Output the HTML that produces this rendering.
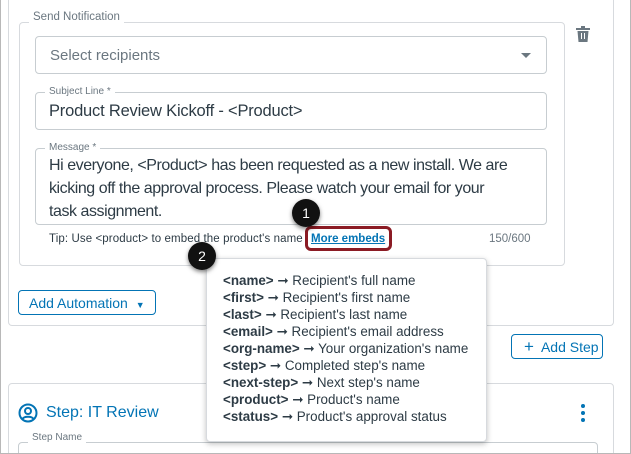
<!DOCTYPE html>
<html style="overflow:hidden;width:631px;height:454px"><head><style>
*{box-sizing:border-box;margin:0;padding:0}
body{width:631px;height:454px;overflow:hidden;background:#fff;font-family:"Liberation Sans",sans-serif;color:#2d3b45;position:relative}
.abs{position:absolute}
.frame{left:0;top:0;width:631px;height:454px;border:1px solid #b8b8b8;border-top:none;z-index:5;pointer-events:none}
.card{border:1px solid #d7dade;border-radius:4px}
.inp{border:1px solid #c7cdd1;border-radius:4px;background:#fff}
.lbl{font-size:10px;color:#6b7780;background:#fff;padding:0 4px}
.pop{left:206px;top:258px;width:281px;height:184px;background:#fff;border:1px solid #d7dade;border-radius:4px;box-shadow:0 2px 6px rgba(0,0,0,.25);padding:13px 0 0 16px;font-size:13.4px;line-height:17px;color:#2d3b45}
.pop b{font-weight:bold}
.badge{width:28px;height:28px;border-radius:50%;background:#111;color:#fff;font-size:14px;text-align:center;line-height:28px;box-shadow:0 2px 4px rgba(0,0,0,.5)}
.btn{border:1px solid #0374b5;border-radius:4px;color:#0374b5;font-size:14px;background:#fff}
</style></head><body>
<div class="abs frame"></div>
<div class="abs card" style="left:8px;top:-5px;width:606px;height:331px;border-top:none"></div>
<div class="abs card" style="left:19px;top:22px;width:546px;height:244px"></div>
<div class="abs" style="left:29px;top:11px;font-size:11.5px;color:#6b7780;background:#fff;padding:0 4px">Send Notification</div>
<svg class="abs" style="left:576px;top:26px" width="14" height="16" viewBox="0 0 14 16"><rect x="0" y="2" width="14" height="2" fill="#6b7780"/><rect x="5" y="0" width="4" height="2" fill="#6b7780"/><path d="M1.5 5h11l-1 11h-9z" fill="#6b7780"/><rect x="5" y="7" width="1" height="6" fill="#fff"/><rect x="8" y="7" width="1" height="6" fill="#fff"/></svg>
<div class="abs inp" style="left:35px;top:36px;width:512px;height:38px;font-size:15px;color:#6b7780;padding:10px 14px">Select recipients</div>
<div class="abs" style="left:521px;top:53px;width:0;height:0;border-left:5px solid transparent;border-right:5px solid transparent;border-top:5px solid #6b7780"></div>
<div class="abs inp" style="left:35px;top:92px;width:512px;height:38px"></div>
<div class="abs lbl" style="left:45px;top:86px">Subject Line *</div>
<div class="abs" style="left:49px;top:102px;font-size:16.5px;color:#2d3b45;letter-spacing:-0.2px">Product Review Kickoff - &lt;Product&gt;</div>
<div class="abs inp" style="left:35px;top:148px;width:512px;height:77px"></div>
<div class="abs lbl" style="left:45px;top:142px">Message *</div>
<div class="abs" style="left:49px;top:154px;width:496px;font-size:16px;line-height:23px;color:#2d3b45;letter-spacing:-0.45px;white-space:nowrap">Hi everyone, &lt;Product&gt; has been requested as a new install. We are<br>kicking off the approval process. Please watch your email for your<br>task assignment.</div>
<div class="abs" style="left:49px;top:233px;font-size:11.5px;color:#2d3b45;letter-spacing:0.1px">Tip: Use &lt;product&gt; to embed the product's name</div>
<div class="abs" style="left:311px;top:233px;font-size:11.5px;color:#0374b5;text-decoration:underline;font-weight:bold">More embeds</div>
<div class="abs" style="left:489px;top:233px;font-size:11.5px;color:#6b7780">150/600</div>
<div class="abs" style="left:305px;top:226px;width:87px;height:25px;border:3px solid #8b1b24;border-radius:6px"></div>
<div class="abs btn" style="left:18px;top:290px;width:138px;height:25px;padding:4px 0 0 10px">Add Automation <span style="font-size:9px;margin-left:4px">▼</span></div>
<div class="abs btn" style="left:511px;top:334px;width:92px;height:25px;padding:4px 0 0 12px"><span style="font-size:17px;line-height:14px">+</span>&nbsp; Add Step</div>
<div class="abs card" style="left:8px;top:383px;width:606px;height:80px"></div>
<svg class="abs" style="left:18px;top:403px" width="20" height="20" viewBox="0 0 20 20" fill="none" stroke="#0374b5" stroke-width="2"><circle cx="10" cy="10" r="8.5"/><circle cx="10" cy="8" r="3"/><path d="M4.5 16c1.5-3 9.5-3 11 0"/></svg>
<div class="abs" style="left:46px;top:404px;font-size:16px;color:#0374b5">Step: IT Review</div>
<svg class="abs" style="left:579px;top:403px" width="8" height="20"><circle cx="4" cy="3" r="2" fill="#0374b5"/><circle cx="4" cy="10" r="2" fill="#0374b5"/><circle cx="4" cy="17" r="2" fill="#0374b5"/></svg>
<div class="abs card" style="left:18px;top:442px;width:580px;height:30px;border-color:#c7cdd1"></div>
<div class="abs lbl" style="left:28px;top:432px">Step Name</div>
<div class="abs pop">
<div><b>&lt;name&gt;</b> ➞ Recipient's full name</div>
<div><b>&lt;first&gt;</b> ➞ Recipient's first name</div>
<div><b>&lt;last&gt;</b> ➞ Recipient's last name</div>
<div><b>&lt;email&gt;</b> ➞ Recipient's email address</div>
<div><b>&lt;org-name&gt;</b> ➞ Your organization's name</div>
<div><b>&lt;step&gt;</b> ➞ Completed step's name</div>
<div><b>&lt;next-step&gt;</b> ➞ Next step's name</div>
<div><b>&lt;product&gt;</b> ➞ Product's name</div>
<div><b>&lt;status&gt;</b> ➞ Product's approval status</div>
</div>
<div class="abs badge" style="left:292px;top:199px">1</div>
<div class="abs badge" style="left:188px;top:242px">2</div>
</body></html>
